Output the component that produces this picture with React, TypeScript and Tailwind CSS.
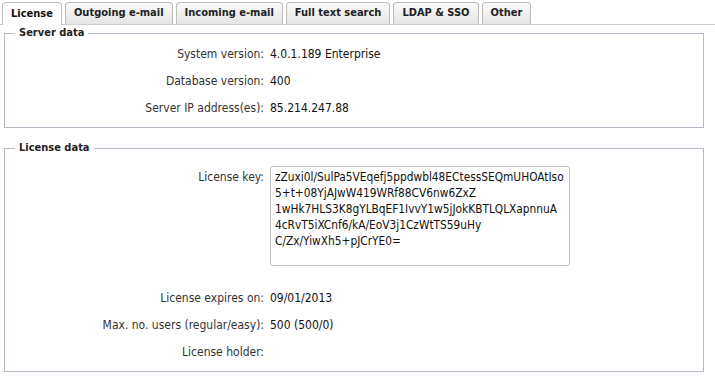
import React from 'react'

const tabs = ['License', 'Outgoing e-mail', 'Incoming e-mail', 'Full text search', 'LDAP & SSO', 'Other']

const licenseKey = [
  'zZuxi0l/SulPa5VEqefj5ppdwbl48ECtessSEQmUHOAtIso',
  '5+t+08YjAJwW419WRf88CV6nw6ZxZ',
  '1wHk7HLS3K8gYLBqEF1IvvY1w5jJokKBTLQLXapnnuA',
  '4cRvT5iXCnf6/kA/EoV3j1CzWtTS59uHy',
  'C/Zx/YiwXh5+pJCrYE0=',
].join('\n')

function Row({ label, value }: { label: string; value?: string }) {
  return (
    <div className="grid grid-cols-[259px_1fr] gap-x-[6px] h-[27px] items-center leading-[16px]">
      <div className="text-right text-[#333]">{label}</div>
      <div className="text-[#111]">{value}</div>
    </div>
  )
}

function Section({ title, children, className = '' }: { title: string; children: React.ReactNode; className?: string }) {
  return (
    <fieldset className={`border border-[#b9b9c9] w-[700px] pb-[6px] min-w-0 ${className}`}>
      <legend className="ml-[10px] px-[4px] text-[11px] font-bold leading-[14px] text-[#222]">{title}</legend>
      {children}
    </fieldset>
  )
}

export default function App() {
  return (
    <div className="w-[715px] h-[381px] bg-white overflow-hidden text-[12px] font-['DejaVu_Sans_Condensed','DejaVu_Sans',sans-serif] [font-stretch:condensed]">
      <div className="flex items-end gap-[3px] pl-[2px] h-[25px] border-b border-[#d0d0d0]">
        {tabs.map((t, i) => (
          <div
            key={t}
            className={
              i === 0
                ? 'relative -mb-px h-[23px] bg-white border border-b-0 border-[#bdbdbd] rounded-t-[4px] px-[8px] flex items-center text-[11px] font-bold text-[#111]'
                : 'h-[22px] bg-gradient-to-b from-[#fbfbfb] to-[#e4e4e4] border border-b-0 border-[#bdbdbd] rounded-t-[4px] px-[8px] flex items-center text-[11px] font-bold text-[#222]'
            }
          >
            {t}
          </div>
        ))}
      </div>

      <div className="pl-[4px] pt-[1px]">
        <Section title="Server data">
          <Row label="System version:" value="4.0.1.189 Enterprise" />
          <Row label="Database version:" value="400" />
          <Row label="Server IP address(es):" value="85.214.247.88" />
        </Section>

        <Section title="License data" className="mt-[13px]">
          <div className="grid grid-cols-[259px_1fr] gap-x-[6px] items-start pt-[11px] pb-[18px] leading-[16px]">
            <div className="text-right text-[#333] pt-[3px]">License key:</div>
            <textarea
              readOnly
              value={licenseKey}
              wrap="off"
              className="w-[300px] h-[100px] border border-[#c4c4c4] rounded-[3px] px-[4px] pt-[2px] leading-[16px] text-[11.8px] text-[#111] resize-none overflow-hidden whitespace-pre outline-none font-['DejaVu_Sans_Condensed','DejaVu_Sans',sans-serif] [font-stretch:condensed]"
            />
          </div>
          <Row label="License expires on:" value="09/01/2013" />
          <Row label="Max. no. users (regular/easy):" value="500 (500/0)" />
          <Row label="License holder:" />
        </Section>
      </div>
    </div>
  )
}
